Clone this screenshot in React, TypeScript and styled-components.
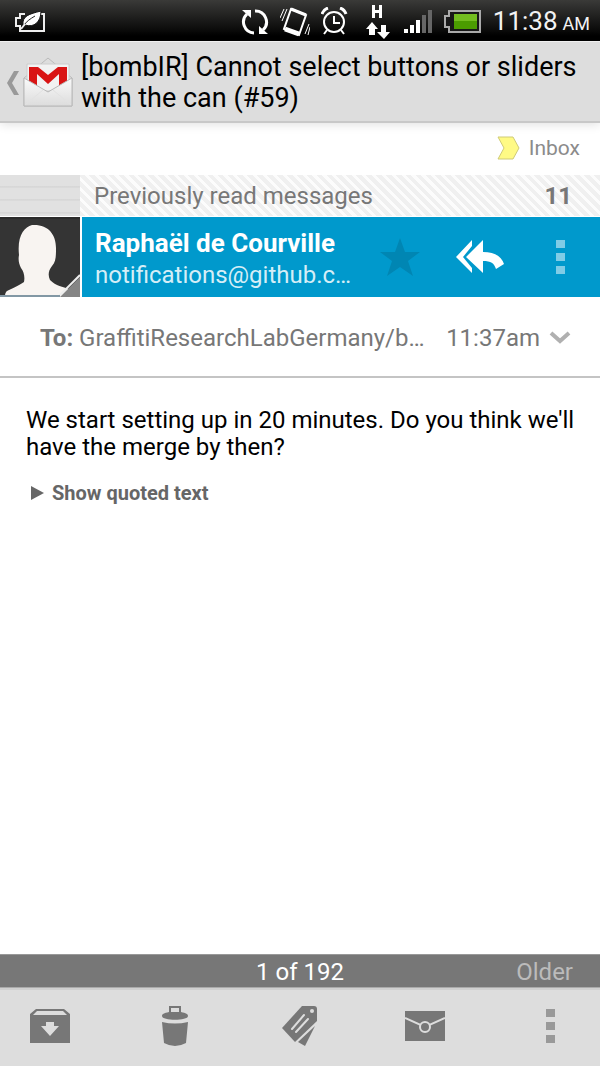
import React from "react";
import styled, { createGlobalStyle } from "styled-components";

const Global = createGlobalStyle`
  * { box-sizing: border-box; }
  html, body, #root { height: 100%; margin: 0; }
  body { font-family: Roboto, "Liberation Sans", sans-serif; background: #fff; color: #000; }
  svg { display: block; flex: none; }
`;

const PlainButton = styled.button`
  border: 0;
  padding: 0;
  background: none;
  font: inherit;
  color: inherit;
  display: flex;
  align-items: center;
  justify-content: center;
  cursor: pointer;
`;

const Screen = styled.div`
  min-height: 100vh;
  display: flex;
  flex-direction: column;
`;

const StatusBar = styled.div`
  height: 41px;
  flex: none;
  display: flex;
  align-items: center;
  padding: 2px 10px 0 15px;
  background: linear-gradient(#3a3a38, #000 90%);
  color: #f2f2f2;
`;

const StatusIcons = styled.div`
  display: flex;
  align-items: center;
  gap: 12px;
  margin-left: auto;
`;

const AlertIcons = styled.div`
  display: flex;
  align-items: center;
  gap: 11px;
  margin-right: 6px;
`;

const Clock = styled.time`
  font-size: 26px;
  line-height: 40px;
  padding-top: 2px;
  white-space: nowrap;
`;

const Meridiem = styled.span`
  font-size: 18px;
  margin-left: 5px;
`;

const Header = styled.header`
  min-height: 82px;
  flex: none;
  display: flex;
  align-items: center;
  padding: 2px 16px 0 6px;
  background: #dddddd;
  border-top: 1px solid #f0f0f0;
  border-bottom: 2px solid #c8c8c8;
  box-shadow: 0 1px 10px #0002;
`;

const UpButton = styled(PlainButton)`
  gap: 4px;
  margin-right: 8px;
`;

const Subject = styled.h1`
  margin: 0;
  font-size: 27px;
  line-height: 31px;
  font-weight: 400;
`;

const Labels = styled.div`
  height: 52px;
  flex: none;
  display: flex;
  align-items: center;
  justify-content: flex-end;
  gap: 9px;
  padding: 0 20px 2px 0;
  font-size: 21px;
  color: #8b8b8b;
`;

const ReadRow = styled(PlainButton)`
  height: 42px;
  width: 100%;
  flex: none;
  align-items: stretch;
  justify-content: flex-start;
  border-bottom: 1px solid #fff;
  color: #777;
  font-size: 24px;
`;

const PaperStack = styled.span`
  width: 80px;
  flex: none;
  background: repeating-linear-gradient(#e1e1e1 0 11px, #cecece 12px, #e6e6e6 13px);
`;

const Hatched = styled.span`
  flex: 1;
  display: flex;
  align-items: center;
  justify-content: space-between;
  padding: 0 28px 0 14px;
  background: repeating-linear-gradient(45deg, #f0f0f0 0 4px, #fcfcfc 4px 7px);
`;

const Sender = styled.section`
  height: 80px;
  flex: none;
  display: flex;
  background: #0099cc;
  color: #fff;
`;

const AvatarFrame = styled.div`
  width: 82px;
  flex: none;
  border-right: 2px solid #fff;
`;

const SenderText = styled.div`
  flex: 1;
  min-width: 0;
  padding: 10px 0 0 13px;
`;

const SenderName = styled.div`
  font-size: 26px;
  line-height: 33px;
  font-weight: 700;
  white-space: nowrap;
`;

const SenderMail = styled.div`
  font-size: 24px;
  line-height: 30px;
  color: #d5eef7;
  white-space: nowrap;
`;

const SenderButton = styled(PlainButton)`
  width: 80px;
`;

const Recipients = styled.div`
  height: 81px;
  flex: none;
  display: flex;
  align-items: center;
  padding: 2px 29px 0 40px;
  border-bottom: 2px solid #c4c4c4;
  color: #777;
  font-size: 24px;
  white-space: nowrap;
`;

const RecipientText = styled.span`
  flex: 1;
`;

const TimeButton = styled(PlainButton)`
  gap: 9px;
`;

const Message = styled.main`
  flex: 1;
  padding: 29px 20px 29px 26px;
`;

const Paragraph = styled.p`
  margin: 0 0 20px;
  font-size: 24px;
  line-height: 27px;
`;

const QuoteButton = styled(PlainButton)`
  gap: 8px;
  margin-left: 5px;
  font-size: 20px;
  line-height: 24px;
  font-weight: 700;
  color: #666;
`;

const Pager = styled.nav`
  height: 34px;
  flex: none;
  display: grid;
  grid-template-columns: 1fr auto 1fr;
  align-items: center;
  padding: 1px 27px 0;
  background: #777;
  border-top: 1px solid #999;
  border-bottom: 1px solid #aaa;
  font-size: 24px;
  color: #fff;
`;

const OlderButton = styled(PlainButton)`
  color: #bbb;
  justify-self: end;
`;

const Toolbar = styled.footer`
  height: 78px;
  flex: none;
  display: flex;
  justify-content: space-between;
  padding: 0 30px 4px;
  background: #dddddd;
  border-top: 2px solid #d0d0d0;
`;

const ToolButton = styled(PlainButton)`
  width: 40px;
`;

const Dots = ({ color }: { color: string }) => (
  <svg width="9" height="34" viewBox="0 0 9 34" fill={color}>
    <path d="M0 0h9v8H0zM0 13h9v8H0zM0 26h9v8H0z" />
  </svg>
);

const LeafBattery = () => (
  <svg width="31" height="22" viewBox="0 0 31 22" fill="none" stroke="#eee" strokeWidth="2">
    <path d="M10 3H5v4H1v8h4v5h24V3h-3" />
    <path d="M8 14C7 5 14 3 26 0c0 11-7 17-16 14z" fill="#fff" stroke="#111" strokeWidth="1" />
    <path d="M9 14c3-4 6-6 11-9" stroke="#222" strokeWidth="1" />
    <path d="m6 18 4-5" />
  </svg>
);

const Sync = () => (
  <svg width="28" height="28" viewBox="0 0 28 28" fill="none" stroke="#fff" strokeWidth="3">
    <path d="M6 6A11 11 0 0 0 13 25M22 22A11 11 0 0 0 14 3" />
    <path d="M1 2h9v8zM27 26h-9v-8z" fill="#fff" stroke="none" />
  </svg>
);

const Vibrate = () => (
  <svg width="30" height="32" viewBox="0 0 30 32" fill="none" stroke="#fff">
    <path d="m11 3 15 6-7 20-15-6z" strokeWidth="2" />
    <path d="m11 3 15 6" strokeWidth="3" />
    <path d="m5 23 14 5" strokeWidth="5" />
    <path d="M7 3 2 15M4 3 0 12M25 28l4-10M28 29l2-8" strokeWidth="1" />
  </svg>
);

const Alarm = () => (
  <svg width="27" height="29" viewBox="0 0 27 29" fill="none" stroke="#fff" strokeWidth="2">
    <circle cx="13" cy="15" r="10" />
    <path d="M13 9v7h6M6 23l-3 4M20 23l3 4" />
    <path d="M1 7c1-3 3-5 6-6M25 7c-1-3-3-5-6-6" strokeWidth="3" />
  </svg>
);

const DataArrows = () => (
  <svg width="26" height="34" viewBox="0 0 26 34" fill="#fff">
    <path d="M6 0h3v5h4V0h3v13h-3V8H9v5H6zM6 17l6 7H9v6H3v-6H0zM15 20h5v7h4l-6 7-7-7h4z" />
  </svg>
);

const Signal = () => (
  <svg width="28" height="24" viewBox="0 0 28 24" fill="#fff">
    <path d="M0 19h4v4H0zM6 15h4v8H6zM12 10h4v13h-4z" />
    <path fill="#666" d="M18 5h4v18h-4zM24 0h4v23h-4z" />
  </svg>
);

const Battery = () => (
  <svg width="37" height="23" viewBox="0 0 37 23">
    <path d="M5 1h31v21H5v-5H1V6h4z" fill="#181818" stroke="#aaa" strokeWidth="2" />
    <path d="M10 4h23v15H10z" fill="#4b9c00" />
    <path d="M10 4h23v7H10z" fill="#73bd20" />
  </svg>
);

const GmailLogo = () => (
  <svg width="50" height="51" viewBox="0 0 50 51">
    <defs>
      <linearGradient id="paper" x2="0" y2="1">
        <stop stopColor="#fafafa" />
        <stop offset="1" stopColor="#dcdcdc" />
      </linearGradient>
    </defs>
    <path d="M1 21 25 1l24 20v28H1z" fill="#ddd" stroke="#bbb" />
    <path d="M4 7h42v27H4z" fill="#f2f2f2" stroke="#ccc" />
    <path d="M6 10h9l10 8 10-8h9v20h-8V17l-11 10-11-10v13H6z" fill="#d91414" />
    <path d="m1 21 24 14 24-14v28H1z" fill="url(#paper)" stroke="#b8b8b8" />
    <path d="M2 48 20 33M48 48 30 33" stroke="#e2e2e2" />
  </svg>
);

const Avatar = () => (
  <svg width="80" height="80" viewBox="0 0 80 80">
    <path fill="#343434" d="M0 0h80v80H0z" />
    <path d="M5 80c0-4 1-6 4-7 6-3 11-5 15-8 1-5 0-10-3-14-2-4-3-8-2-13C17 19 24 10 32 8c16-1 24 9 24 23 0 8 0 14-4 18-4 5-4 10-2 14 6 6 13 7 19 9 6 2 10 4 10 8z" fill="#f8f4f1" />
    <path d="m60 80 20-20v20z" fill="#858585" />
    <path d="m58 80 22-22" stroke="#eee" strokeWidth="2" />
    <path d="M0 1h80" stroke="#222" />
    <path d="M0 79h60" stroke="#8297a4" strokeWidth="2" />
  </svg>
);

export default function App() {
  return (
    <>
      <Global />
      <Screen>
        <StatusBar>
          <LeafBattery />
          <StatusIcons>
            <AlertIcons>
              <Sync />
              <Vibrate />
              <Alarm />
            </AlertIcons>
            <DataArrows />
            <Signal />
            <Battery />
            <Clock>11:38<Meridiem>AM</Meridiem></Clock>
          </StatusIcons>
        </StatusBar>
        <Header>
          <UpButton aria-label="Back to inbox">
            <svg width="13" height="24" viewBox="0 0 13 24" fill="#999"><path d="M8 0h5L6 12l7 12H8L1 12z" /></svg>
            <GmailLogo />
          </UpButton>
          <Subject>[bombIR] Cannot select buttons or sliders with the can (#59)</Subject>
        </Header>
        <Labels>
          <svg width="23" height="24" viewBox="0 0 23 24"><path d="M1 1h15l6 11-6 11H1l6-11z" fill="#fffa85" stroke="#cfcb78" /></svg>
          Inbox
        </Labels>
        <ReadRow>
          <PaperStack />
          <Hatched><span>Previously read messages</span><b>11</b></Hatched>
        </ReadRow>
        <Sender>
          <AvatarFrame><Avatar /></AvatarFrame>
          <SenderText>
            <SenderName>Raphaël de Courville</SenderName>
            <SenderMail>notifications@github.c…</SenderMail>
          </SenderText>
          <SenderButton aria-label="Star">
            <svg width="40" height="38" viewBox="0 0 40 38"><path d="m20 0 5 14h15L28 23l5 15-13-9-13 9 5-15L0 14h15z" fill="#0086b3" /></svg>
          </SenderButton>
          <SenderButton aria-label="Reply all">
            <svg width="48" height="34" viewBox="0 0 48 34" fill="#fff"><path d="M16 0v6L7 17l9 11v5L0 17zM27 0v12c12 0 19 5 21 12l-8 5c-2-6-5-8-13-8v12L10 17z" /></svg>
          </SenderButton>
          <SenderButton aria-label="More message options"><Dots color="#80cce6" /></SenderButton>
        </Sender>
        <Recipients>
          <RecipientText><b>To:</b> GraffitiResearchLabGermany/b…</RecipientText>
          <TimeButton aria-label="Message details, 11:37am">
            11:37am
            <svg width="22" height="13" viewBox="0 0 22 13" fill="none" stroke="#b0b0b0" strokeWidth="4"><path d="m2 2 9 8 9-8" /></svg>
          </TimeButton>
        </Recipients>
        <Message>
          <Paragraph>We start setting up in 20 minutes. Do you think we'll have the merge by then?</Paragraph>
          <QuoteButton>
            <svg width="13" height="14" viewBox="0 0 13 14" fill="#666"><path d="m0 0 13 7-13 7z" /></svg>
            Show quoted text
          </QuoteButton>
        </Message>
        <Pager>
          <span />
          <span>1 of 192</span>
          <OlderButton>Older</OlderButton>
        </Pager>
        <Toolbar>
          <ToolButton aria-label="Archive">
            <svg width="40" height="34" viewBox="0 0 40 34"><path fill="#777" fillRule="evenodd" d="M6 0h28l6 5v29H0V5zM7 2 3 6h34l-4-4zM16 13v4h-5l9 10 9-10h-5v-4z" /></svg>
          </ToolButton>
          <ToolButton aria-label="Delete">
            <svg width="28" height="40" viewBox="0 0 28 40" fill="#777"><path fillRule="evenodd" d="M8 0h12v6c5 1 7 2 7 4 0 5-26 5-26 0 0-2 2-3 7-4zM10 2v4h8V2z" /><path d="M1 16q13 3 26 0l-2 21q-11 6-22 0z" /></svg>
          </ToolButton>
          <ToolButton aria-label="Change labels">
            <svg width="38" height="40" viewBox="0 0 38 40" fill="#777">
              <path d="M21 0h12q3 0 3 3v12L14 36 1 22z" />
              <path d="m34 20-10 20-7-4z" />
              <path d="m11 23 12-14M15 26 27 13" stroke="#ddd" strokeWidth="2" strokeLinecap="round" />
              <circle cx="31" cy="5" r="2" fill="#ddd" />
            </svg>
          </ToolButton>
          <ToolButton aria-label="Mark unread">
            <svg width="40" height="30" viewBox="0 0 40 30"><path fill="#777" d="M0 0h40v30H0z" /><path d="m0 7 20 9 20-9" fill="none" stroke="#ddd" strokeWidth="2" /><circle cx="20" cy="16" r="5" fill="#777" stroke="#ddd" strokeWidth="2" /></svg>
          </ToolButton>
          <ToolButton aria-label="More options"><Dots color="#999" /></ToolButton>
        </Toolbar>
      </Screen>
    </>
  );
}
